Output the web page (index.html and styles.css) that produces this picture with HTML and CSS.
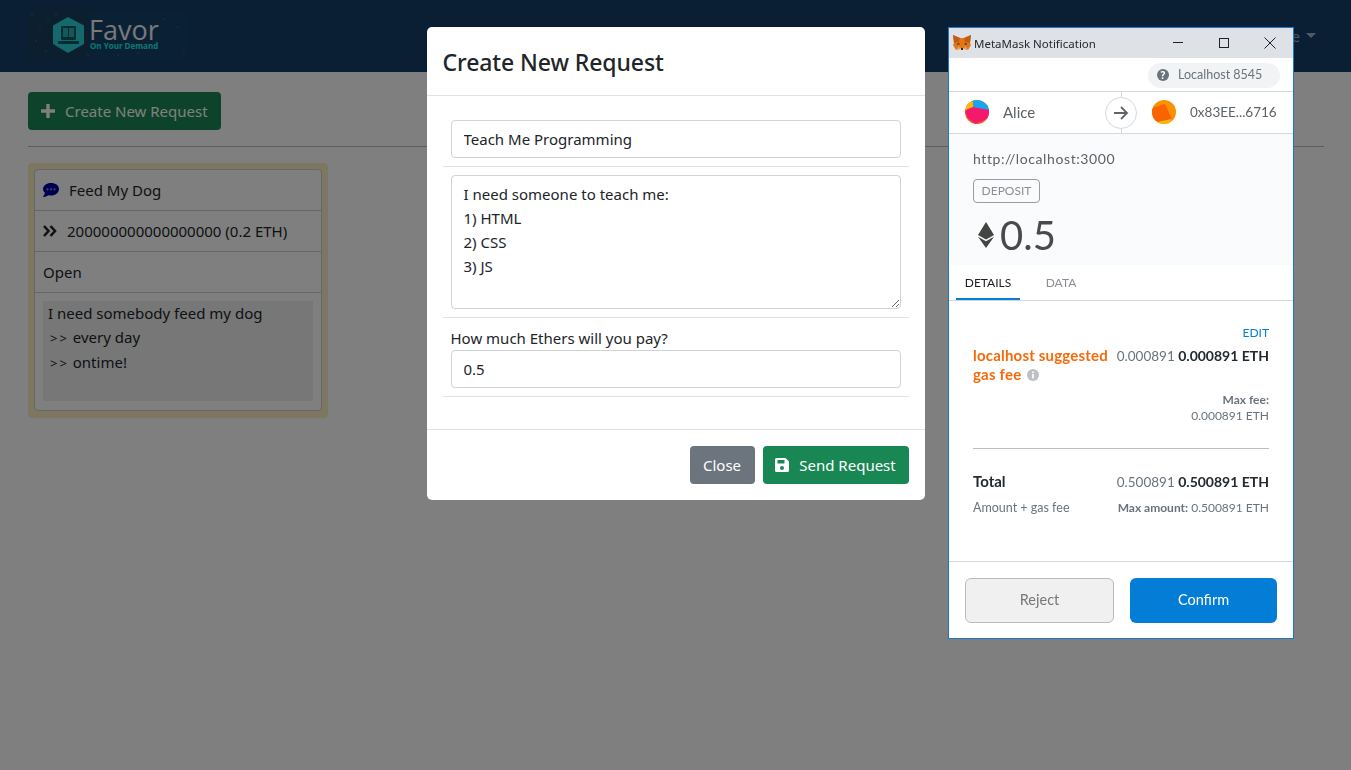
FILE: index.html
```html
<!DOCTYPE html>
<html lang="en">
<head>
<meta charset="utf-8">
<title>Favor</title>
<link rel="stylesheet" href="styles.css">
</head>
<body>
<nav class="navbar">
  <a class="brand">
    <svg class="brand-art" viewBox="0 0 160 48" width="160" height="48">
      <rect width="160" height="48" fill="#15406a"/>
      <rect x="0" width="62" height="48" fill="#173f5e"/>
      <g fill="#3f7a88"><circle cx="4" cy="4" r=".7"/><circle cx="12" cy="16" r=".7"/><circle cx="20" cy="8" r=".7"/><circle cx="8" cy="30" r=".7"/><circle cx="18" cy="40" r=".7"/><circle cx="28" cy="4" r=".7"/><circle cx="110" cy="42" r=".7"/><circle cx="150" cy="16" r=".7"/><circle cx="156" cy="40" r=".7"/><circle cx="60" cy="44" r=".7"/><circle cx="90" cy="44" r=".7"/><circle cx="136" cy="8" r=".7"/></g>
      <polygon points="40,6 56,14.500 56,33 40,42 25,33 25,14.500" fill="#2ad0d8"/>
      <rect x="33" y="15" width="15" height="14" rx="1" fill="#0f5a60"/>
      <rect x="35" y="17" width="11" height="9" fill="#2ab0b8"/>
      <rect x="40" y="17" width="1" height="9" fill="#0f5a60"/>
      <rect x="30" y="30" width="21" height="3" rx="1" fill="#0f5a60"/>
      <text x="61" y="29" class="brand-name">Favor</text>
      <text x="62" y="38" class="brand-sub">On Your Demand</text>
    </svg>
  </a>
  <a class="nav-user">Alice</a>
</nav>

<main class="page">
  <button class="btn btn-green">
    <svg class="icon" viewBox="0 0 16 16" width="16" height="16"><path d="M6.300 1h3.400v5.300H15v3.400H9.700V15H6.300V9.700H1V6.300h5.300z"/></svg>
    <span>Create New Request</span>
  </button>
  <hr class="page-rule">
  <section class="req-wrap">
    <ul class="req-card">
      <li class="req-row">
        <svg class="icon-chat" viewBox="0 0 16 14" width="16" height="14"><path fill="#0000a0" d="M8 0C3.600 0 0 2.700 0 6c0 1.500.7 2.800 1.900 3.800C1.600 11.400.6 12.800.1 13.500c0 .2.1.4.3.4 2 0 3.600-.8 4.700-1.700.9.300 1.900.4 2.900.4 4.400 0 8-2.900 8-6.600S12.400 0 8 0z"/><circle cx="4.500" cy="6.300" r="1.100" fill="#8f8fd0"/><circle cx="8" cy="6.300" r="1.100" fill="#8f8fd0"/><circle cx="11.500" cy="6.300" r="1.100" fill="#8f8fd0"/></svg>
        <span>Feed My Dog</span>
      </li>
      <li class="req-row">
        <svg class="icon-chev" viewBox="0 0 14 12" width="14" height="12"><path d="M1 1l4.500 5L1 11M7.500 1l4.500 5-4.500 5" fill="none" stroke="#212529" stroke-width="2.600"/></svg>
        <span>200000000000000000 (0.2 ETH)</span>
      </li>
      <li class="req-row">Open</li>
      <li class="req-desc-row">
        <div class="req-desc">I need somebody feed my dog<br><span class="mono-gt">&gt;&gt;</span> every day<br><span class="mono-gt">&gt;&gt;</span> ontime!</div>
      </li>
    </ul>
  </section>
</main>

<div class="backdrop"></div>

<div class="modal-layer">
  <div class="modal">
    <header class="modal-head"><h2>Create New Request</h2></header>
    <div class="modal-body">
      <div class="field"><input class="control" type="text" value="Teach Me Programming"></div>
      <div class="field"><textarea class="control area">I need someone to teach me:
1) HTML
2) CSS
3) JS</textarea></div>
      <div class="field field-label">
        <label class="label">How much Ethers will you pay?</label>
        <input class="control" type="text" value="0.5">
      </div>
    </div>
    <footer class="modal-foot">
      <button class="btn btn-gray">Close</button>
      <button class="btn btn-send">
        <svg class="icon" viewBox="0 0 14 14" width="14" height="14"><path fill-rule="evenodd" d="M1.500 0h9L14 3.500V12.500A1.500 1.500 0 0 1 12.500 14h-11A1.500 1.500 0 0 1 0 12.500v-11A1.500 1.500 0 0 1 1.500 0zM2.500 2v3.500h7V2zM7 8a2 2 0 1 0 0 4 2 2 0 0 0 0-4z"/></svg>
        <span>Send Request</span>
      </button>
    </footer>
  </div>
</div>

<aside class="mm">
  <div class="mm-title">
    <svg class="mm-fox" viewBox="0 0 18 16" width="18" height="16">
      <polygon points="0,0 7,3 11,3 18,0 17,8 18,10 15,15 11,14 10,13 8,13 7,14 3,15 0,10 1,8" fill="#e2761b"/>
      <polygon points="0,0 7,3 6,7 1,8" fill="#c05f14"/>
      <polygon points="18,0 11,3 12,7 17,8" fill="#c05f14"/>
      <polygon points="7,9 5,8 4,10" fill="#2a2a2a"/>
      <polygon points="11,9 13,8 14,10" fill="#2a2a2a"/>
      <polygon points="8,13 10,13 10,15 8,15" fill="#2a2a2a"/>
      <polygon points="7,14 3,15 6,11" fill="#f6a35c"/>
      <polygon points="11,14 15,15 12,11" fill="#f6a35c"/>
    </svg>
    <span class="mm-title-text">MetaMask Notification</span>
    <div class="win-btns">
      <svg viewBox="0 0 12 12" width="12" height="12"><path d="M1 5.500h10" stroke="#222" fill="none"/></svg>
      <svg viewBox="0 0 12 12" width="12" height="12"><rect x="1.500" y="1.500" width="9" height="9" stroke="#222" fill="none"/></svg>
      <svg viewBox="0 0 12 12" width="12" height="12"><path d="M.5.500l11 11M11.500.500l-11 11" stroke="#222" fill="none"/></svg>
    </div>
  </div>
  <div class="mm-net">
    <div class="mm-pill">
      <svg viewBox="0 0 12 12" width="12" height="12"><circle cx="6" cy="6" r="6" fill="#6a737d"/><text x="6" y="9.500" class="q">?</text></svg>
      <span>Localhost 8545</span>
    </div>
  </div>
  <div class="mm-accounts">
    <div class="mm-acc">
      <svg viewBox="0 0 24 24" width="24" height="24" class="avatar">
        <defs><clipPath id="c1"><circle cx="12" cy="12" r="12"/></clipPath></defs>
        <g clip-path="url(#c1)"><rect width="24" height="24" fill="#f9590f"/><polygon points="0,12 8,4 24,6 24,18 10,24 3,18" fill="#f5196e"/><polygon points="8,0 24,0 24,10 8,7" fill="#18a5f0"/><polygon points="0,0 8,2 8,7 0,10" fill="#f9b90a"/></g>
      </svg>
      <span>Alice</span>
    </div>
    <div class="mm-arrow">
      <svg viewBox="0 0 16 16" width="16" height="16"><path d="M1 8h13M8 2l6 6-6 6" fill="none" stroke="#5f6469" stroke-width="1.800"/></svg>
    </div>
    <div class="mm-acc mm-acc-r">
      <svg viewBox="0 0 24 24" width="24" height="24" class="avatar">
        <defs><clipPath id="c2"><circle cx="12" cy="12" r="12"/></clipPath></defs>
        <g clip-path="url(#c2)"><rect width="24" height="24" fill="#fb9002"/><polygon points="0,8 13,4 20,19 6,22 0,20" fill="#f96400"/><polygon points="6,22 20,19 17,24 6,24" fill="#f9b90a"/></g>
      </svg>
      <span>0x83EE...6716</span>
    </div>
  </div>
  <div class="mm-summary">
    <div class="mm-origin">http://localhost:3000</div>
    <div class="mm-tag">DEPOSIT</div>
    <div class="mm-amount">
      <svg viewBox="0 0 16 26" width="16" height="26"><polygon points="8,0 16,13 8,17.500 0,13" fill="#444"/><polygon points="0,14.800 8,19.300 16,14.800 8,26" fill="#444"/></svg>
      <span>0.5</span>
    </div>
  </div>
  <div class="mm-tabs">
    <span class="mm-tab is-active">DETAILS</span>
    <span class="mm-tab">DATA</span>
  </div>
  <div class="mm-details">
    <a class="mm-edit">EDIT</a>
    <div class="mm-fee">
      <div class="mm-fee-label">localhost suggested gas fee <svg viewBox="0 0 12 12" width="12" height="12"><circle cx="6" cy="6" r="6" fill="#bbc0c5"/><rect x="5.200" y="5" width="1.600" height="4.500" fill="#fff"/><rect x="5.200" y="2.500" width="1.600" height="1.600" fill="#fff"/></svg></div>
      <div class="mm-fee-val"><span class="light">0.000891</span> <b>0.000891 ETH</b></div>
    </div>
    <div class="mm-max"><b>Max fee:</b><span>0.000891 ETH</span></div>
    <hr class="mm-rule">
    <div class="mm-total"><b>Total</b><div class="mm-total-val"><span class="light">0.500891</span> <b>0.500891 ETH</b></div></div>
    <div class="mm-sub"><span>Amount + gas fee</span><div class="mm-sub-val"><b>Max amount:</b> 0.500891 ETH</div></div>
  </div>
  <div class="mm-foot">
    <button class="mm-btn mm-reject">Reject</button>
    <button class="mm-btn mm-confirm">Confirm</button>
  </div>
</aside>
</body>
</html>
```
FILE: styles.css
```css
* { box-sizing: border-box; }
html, body { height: 100%; }
body {
  margin: 0;
  background: #fff;
  color: #212529;
  font: 15px/24px "Noto Sans", "Open Sans", sans-serif;
  overflow: hidden;
}
.navbar {
  height: 72px;
  background: #143c68;
  display: flex;
  align-items: center;
  justify-content: space-between;
  padding: 0 28px 0 28px;
}
.brand { display: block; height: 48px; margin-top: -3px; }
.brand-art { display: block; }
.brand-name { font: 500 27px "Open Sans", sans-serif; fill: #f2f2f2; }
.brand-sub { font: 700 8px "Open Sans", sans-serif; fill: #14f0e0; }
.nav-user {
  color: rgba(255,255,255,.6);
  font-size: 15px;
  margin-top: -1px;
  display: flex;
  align-items: center;
  gap: 6px;
  margin-right: 7px;
}
.nav-user::after {
  content: "";
  border-top: 5px solid rgba(255,255,255,.6);
  border-left: 5px solid transparent;
  border-right: 5px solid transparent;
}
.page { padding: 20px 27px 0 28px; }
.btn {
  height: 38px;
  border: 0;
  border-radius: 4px;
  font: inherit;
  color: #fff;
  padding: 0 12px;
  display: inline-flex;
  align-items: center;
  gap: 10px;
  white-space: nowrap;
}
.icon { fill: #fff; flex: none; }
.btn-green { background: #198754; width: 193px; gap: 9px; }
.page-rule { border: 0; border-top: 1px solid #bbb; margin: 16px 0 16px; }
.req-wrap {
  width: 300px;
  height: 255px;
  background: #fbedc0;
  border-radius: 4px;
  padding: 6px;
}
.req-card {
  list-style: none;
  margin: 0;
  padding: 0;
  background: #fff;
  border: 1px solid #ccc;
  border-radius: 4px;
  height: 242px;
}
.req-row {
  height: 41px;
  padding: 0 8px;
  border-bottom: 1px solid #ccc;
  display: flex;
  align-items: center;
  gap: 10px;
}
.req-desc-row { padding: 8px; }
.req-desc {
  height: 100px;
  background: #eee;
  padding: 0 5px;
}
.mono-gt { font-size: 13px; letter-spacing: 2px; margin-left: 2px; }
.icon-chat { flex: none; }
.icon-chev { flex: none; }
.backdrop { position: fixed; inset: 0; background: rgba(0,0,0,.5); }
.modal-layer {
  position: fixed;
  inset: 0;
  display: flex;
  justify-content: center;
  align-items: flex-start;
  padding-top: 27px;
}
.modal {
  width: 498px;
  height: 473px;
  background: #fff;
  border-radius: 5px;
  display: flex;
  flex-direction: column;
}
.modal-head { height: 69px; border-bottom: 1px solid #dee2e6; padding: 2px 16px 0; display: flex; align-items: center; }
.modal-head h2 { margin: 0; font-size: 23px; font-weight: 500; line-height: 29px; letter-spacing: -.1px; }
.modal-body { flex: 1; padding: 16px; }
.field { padding: 8px; border-bottom: 1px solid #dee2e6; }
.label { display: block; height: 24px; line-height: 24px; }
.control {
  display: block;
  width: 100%;
  height: 38px;
  border: 1px solid #ced4da;
  border-radius: 4px;
  padding: 6px 12px;
  font: inherit;
  color: #212529;
}
.area { height: 134px; resize: vertical; }
.modal-foot {
  height: 71px;
  border-top: 1px solid #dee2e6;
  display: flex;
  justify-content: flex-end;
  align-items: center;
  gap: 8px;
  padding: 0 16px;
}
.btn-gray { background: #6c757d; width: 65px; justify-content: center; }
.btn-send { background: #198754; width: 146px; justify-content: center; }

.mm {
  position: fixed;
  left: 948px;
  top: 27px;
  width: 346px;
  height: 612px;
  background: #fff;
  border: 1px solid #1a78c8;
  display: flex;
  flex-direction: column;
  font-family: "Lato", "Noto Sans", sans-serif;
  color: #24292e;
}
.mm-title {
  height: 30px;
  background: #dee1e6;
  display: flex;
  align-items: center;
  padding-left: 4px;
  font: 11.500px "Noto Sans", sans-serif;
  flex: none;
}
.mm-fox { flex: none; }
.mm-title-text { margin-left: 3px; }
.win-btns { margin-left: auto; display: flex; align-items: center; gap: 34px; padding-right: 17px; }
.mm-net { height: 33px; display: flex; justify-content: flex-end; align-items: center; padding-right: 13px; flex: none; padding-top: 1px; }
.mm-pill {
  width: 132px;
  height: 25px;
  border-radius: 13px;
  background: #f2f3f4;
  display: flex;
  align-items: center;
  gap: 9px;
  padding-left: 9px;
  font-size: 12.500px;
  color: #6a737d;
}
.q { font: 700 10px "Noto Sans", sans-serif; fill: #fff; text-anchor: middle; }
.mm-accounts {
  height: 43px;
  border-top: 1px solid #d6d9dc;
  border-bottom: 1px solid #d6d9dc;
  display: flex;
  align-items: center;
  position: relative;
  flex: none;
  font-size: 15px;
  color: #5c6268;
}
.mm-accounts::before { content: ""; position: absolute; left: 172px; top: 0; bottom: 0; width: 1px; background: #d6d9dc; }
.mm-acc { display: flex; align-items: center; gap: 14px; padding-left: 16px; width: 156px; flex: none; line-height: 20px; padding-bottom: 1px; }
.mm-acc-r { padding-left: 15px; gap: 14px; width: 156px; font-size: 13.500px; white-space: nowrap; }
.mm-arrow {
  width: 32px; height: 32px; border-radius: 50%;
  background: #fff; border: 1px solid #d6d9dc;
  display: flex; align-items: center; justify-content: center;
  position: relative;
  flex: none;
}
.avatar { flex: none; }
.mm-summary { height: 131px; background: #fafbfc; padding: 13px 24px 0; flex: none; }
.mm-origin { font-size: 14px; line-height: 24px; color: #5c6268; letter-spacing: .6px; }
.mm-tag {
  width: 67px; height: 24px; margin-top: 8px;
  border: 1px solid #9a9ca0; border-radius: 4px;
  font-size: 12px; line-height: 22px; text-align: center; color: #8b8f94;
}
.mm-amount { display: flex; align-items: center; gap: 6px; margin-top: 7px; padding-left: 5px; height: 50px; color: #4a4a4a; font-size: 40px; }
.mm-tabs { height: 36px; border-bottom: 1px solid #d6d9dc; display: flex; padding-left: 7px; flex: none; font-size: 12px; }
.mm-tab { width: 64px; height: 35px; text-align: center; line-height: 35px; color: #8b8f94; margin-right: 9px; }
.mm-tab.is-active { color: #1c1f22; border-bottom: 2px solid #037dd6; }
.mm-details { flex: 1; padding: 24px 24px 0; font-size: 12px; color: #6a737d; }
.mm-edit { display: block; text-align: right; color: #037dd6; line-height: 16px; }
.mm-fee { display: flex; justify-content: space-between; margin-top: 5px; line-height: 19px; }
.mm-fee-label { width: 138px; font-weight: 700; font-size: 15px; letter-spacing: .2px; color: #f66a0a; }
.mm-fee-label svg { vertical-align: -1px; margin-left: 2px; }
.mm-fee-val, .mm-total-val { font-size: 13.500px; white-space: nowrap; }
.light { color: #6a737d; }
.mm-fee-val b, .mm-total-val b { color: #24292e; font-size: 14px; }
.mm-max { display: flex; flex-direction: column; align-items: flex-end; margin-top: 8px; line-height: 16px; }
.mm-rule { border: 0; border-top: 1px solid #bbc0c5; margin: 24px 0 0; }
.mm-total { display: flex; justify-content: space-between; margin-top: 23px; line-height: 19px; }
.mm-total > b { font-size: 15px; color: #24292e; }
.mm-sub { display: flex; justify-content: space-between; margin-top: 8px; line-height: 16px; font-size: 12.500px; }
.mm-sub-val { font-size: 12px; }
.mm-foot {
  height: 77px;
  border-top: 1px solid #d6d9dc;
  display: flex;
  gap: 16px;
  padding: 16px;
  flex: none;
}
.mm-btn { flex: 1; height: 45px; border-radius: 6px; font: 14.500px "Lato", sans-serif; padding: 0 0 2px; }
.mm-reject { background: #f0f0f0; border: 1px solid #bbb; color: #777; }
.mm-confirm { background: #037dd6; border: 0; color: #fff; }
```
